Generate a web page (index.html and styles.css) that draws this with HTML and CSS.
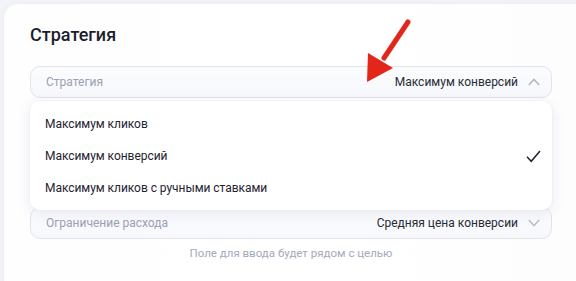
FILE: index.html
```html
<!DOCTYPE html>
<html lang="ru">
<head>
<meta charset="utf-8">
<link rel="stylesheet" href="styles.css">
</head>
<body>
<div class="card">
  <h2 class="title">Стратегия</h2>
  <div class="field field-top">
    <span class="label">Стратегия</span>
    <span class="value">Максимум конверсий</span>
    <svg class="chev" width="12" height="8" viewBox="0 0 12 8"><path d="M0.8 7 6 1.4l5.2 5.6" fill="none" stroke="#aeb4c4" stroke-width="1.4"/></svg>
  </div>
  <div class="field field-second">
    <span class="label">Ограничение расхода</span>
    <span class="value">Средняя цена конверсии</span>
    <svg class="chev" width="12" height="8" viewBox="0 0 12 8"><path d="M0.8 1 6 6.6 11.2 1" fill="none" stroke="#b8bdcc" stroke-width="1.4"/></svg>
  </div>
  <p class="hint">Поле для ввода будет рядом с целью</p>
  <p class="hint">Для расчёта используется цель</p>

  <ul class="menu">
    <li class="item">Максимум кликов</li>
    <li class="item">Максимум конверсий
      <svg class="check" width="15" height="13" viewBox="0 0 15 13"><path d="M1 6.8 5.2 11.3 14 1" fill="none" stroke="#20242f" stroke-width="1.5"/></svg>
    </li>
    <li class="item">Максимум кликов с ручными ставками</li>
  </ul>

  <svg class="arrow" width="60" height="75" viewBox="0 0 60 75">
    <path d="M55 8 31 44" stroke="#e2261a" stroke-width="5" stroke-linecap="round" fill="none"/>
    <path d="M15 39 40 54 14 68 Z" fill="#e2261a"/>
  </svg>
</div>
</body>
</html>
```
FILE: styles.css
```css
* { box-sizing: border-box; }
html, body { margin: 0; padding: 0; }
body {
  background: #f3f4f8;
  font-family: Roboto, "Noto Sans", sans-serif;
  width: 576px;
  height: 281px;
  overflow: hidden;
}
.card {
  position: relative;
  margin: 4px 0 0 4px;
  background: linear-gradient(90deg, #fefeff 0%, #ffffff 60%, #fdfdfe 100%);
  border-radius: 14px 0 0 0;
  padding: 19px 24px 0 26px;
  height: 300px;
  box-shadow: 0 0 6px rgba(40, 50, 90, 0.05);
}
.title {
  margin: 0;
  font-size: 18px;
  font-weight: 500;
  color: #1b1f2c;
  line-height: 24px;
}
.field {
  display: flex;
  align-items: center;
  height: 32px;
  width: 522px;
  padding: 0 11px 0 15px;
  border: 1px solid #e1e4ec;
  border-radius: 10px;
  background: linear-gradient(180deg, #fbfcfe, #f7f8fb);
  font-size: 12px;
}
.field-top { margin-top: 19px; }
.field-second { margin-top: 109px; }
.label { color: #9aa1b4; flex: 1; }
.value { color: #272b36; margin-right: 10px; }
.chev { display: block; }
.hint {
  margin: 0;
  width: 522px;
  text-align: center;
  font-size: 11.5px;
  color: #a4aabb;
  line-height: 16px;
}
.hint:first-of-type { margin-top: 6px; }
.hint + .hint { margin-top: 17px; }
.menu {
  position: absolute;
  left: 26px;
  top: 97px;
  width: 522px;
  height: 109px;
  margin: 0;
  padding: 7px 0 0 0;
  list-style: none;
  background: #fff;
  border-radius: 10px;
  box-shadow: 0 3px 14px rgba(40, 50, 100, 0.10), 0 0 2px rgba(40, 50, 100, 0.06);
}
.item {
  display: flex;
  align-items: center;
  justify-content: space-between;
  height: 32px;
  padding: 0 11px 0 15px;
  font-size: 12px;
  letter-spacing: -0.05px;
  color: #1f2330;
}
.arrow {
  position: absolute;
  left: 349px;
  top: 10px;
}
```
